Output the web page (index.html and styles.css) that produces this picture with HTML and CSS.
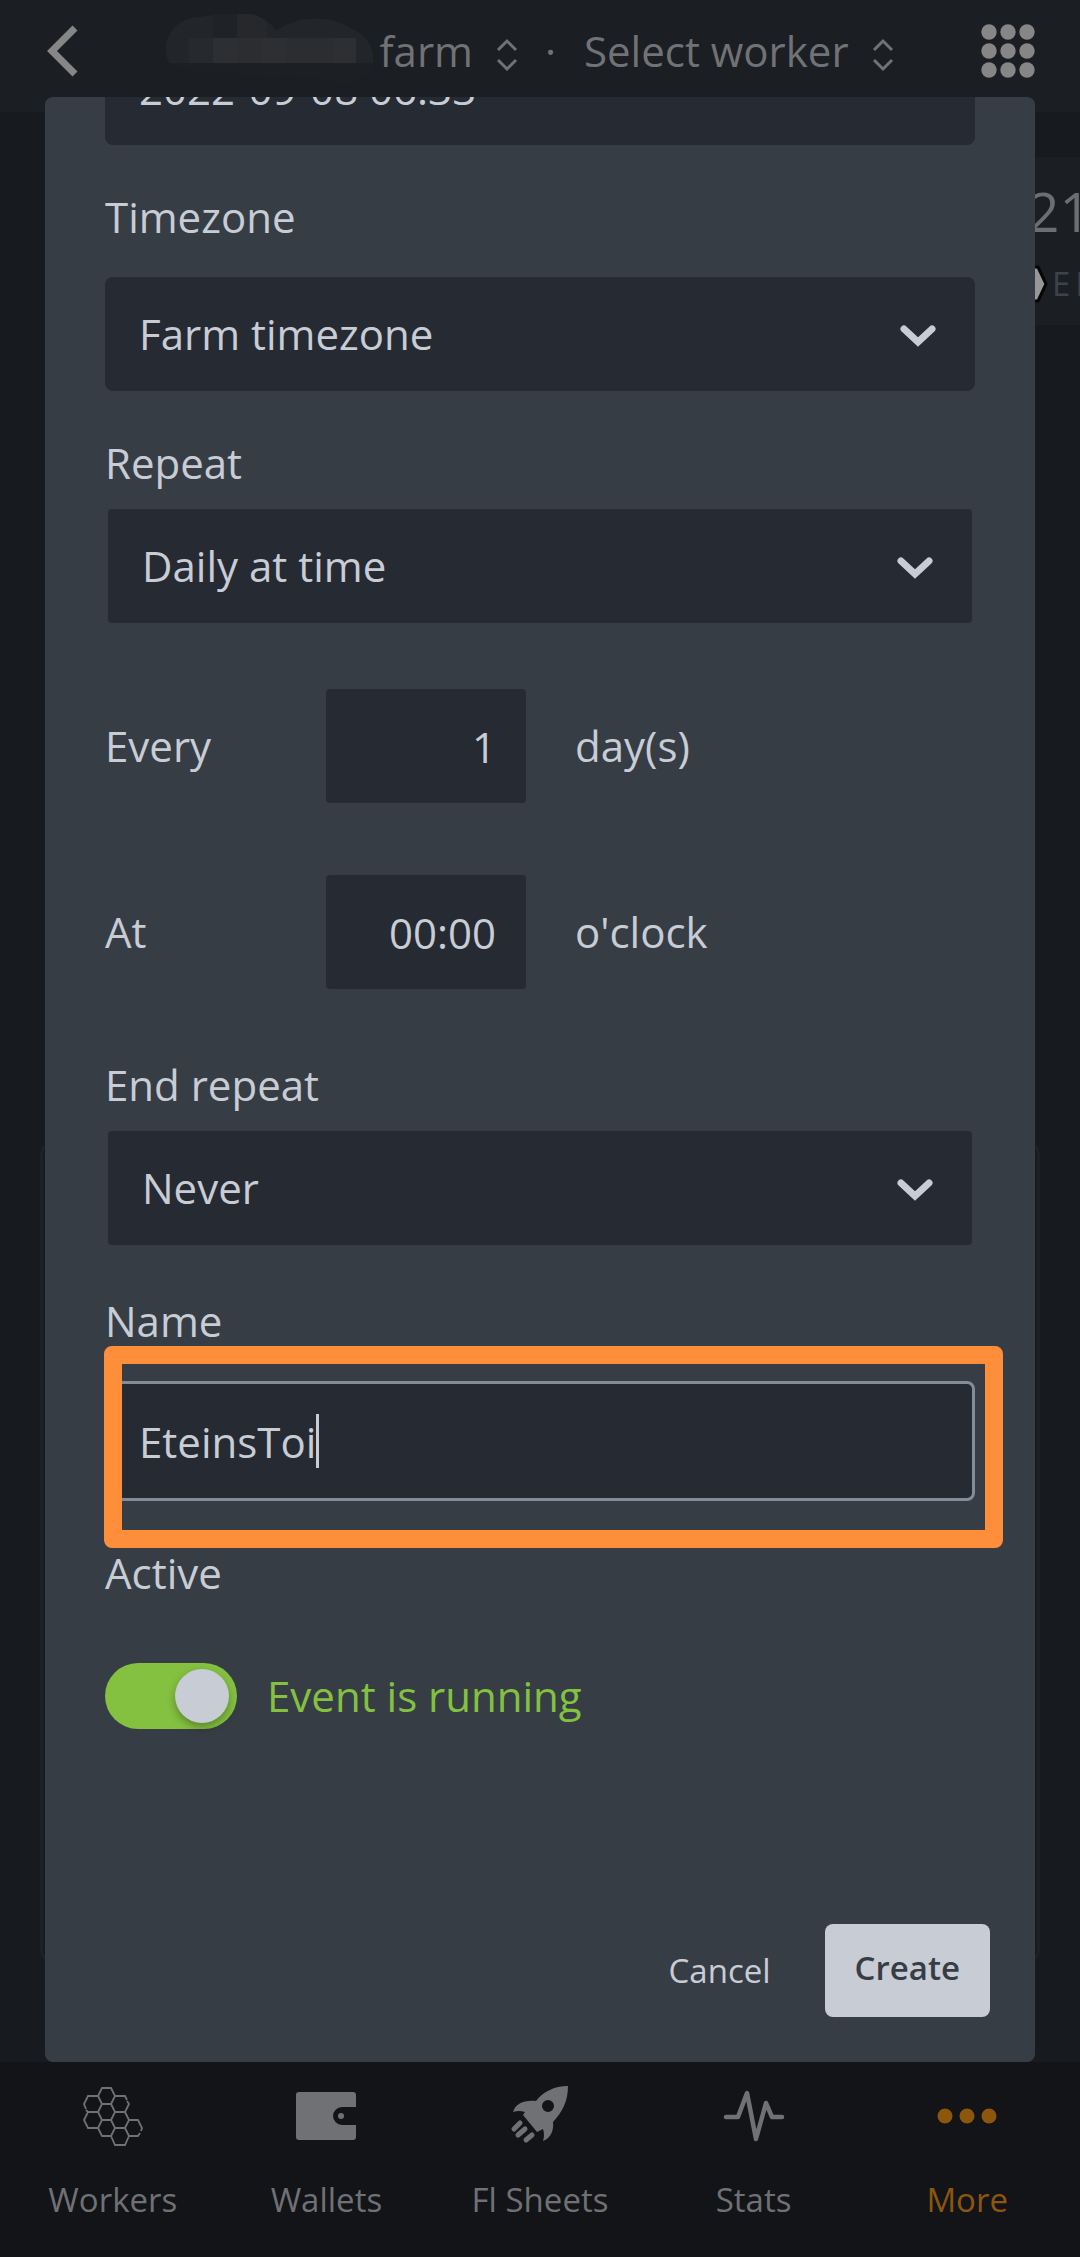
FILE: index.html
```html
<!DOCTYPE html>
<html lang="en">
<head>
<meta charset="utf-8">
<meta name="viewport" content="width=device-width, initial-scale=1">
<title>Create event</title>
<link rel="stylesheet" href="styles.css">
</head>
<body>
<div class="app">
  <header class="topbar">
    <button class="icon-button" type="button" aria-label="Back">
      <svg class="icon-back" viewBox="0 0 32 52"><path d="M30 3 L7 26 L30 49" fill="none" stroke="currentColor" stroke-width="7"/></svg>
    </button>
    <div class="crumbs">
      <button class="crumb" type="button">
        <svg class="redacted" viewBox="0 0 210 74" aria-hidden="true">
          <path d="M4 49 C-6 28 8 4 34 3 Q50 0 62 0 H86 Q102 4 112 17 C128 2 165 0 186 14 C206 20 214 40 206 56 Q196 70 176 70 Q150 62 120 62 Q90 64 60 59 Q20 60 4 49Z" fill="#1c1f23"/>
          <path d="M4 49 C-6 28 8 4 34 3 Q50 0 62 0 H86 Q102 4 112 17 C128 2 165 0 186 14 C202 20 210 34 208 49Z" fill="#222529"/>
          <path d="M48 0H72V24H48Z" fill="#1f2226"/>
          <path d="M72 0H86Q96 2 102 8V24H72Z" fill="#26282c"/>
          <path d="M24 24H48V49H24Z" fill="#26292d"/>
          <path d="M48 24H191V49H48Z" fill="#2d2f33"/>
          <path d="M72 24H96V49H72ZM120 24H168V49H120Z" fill="#2b2d31"/>
        </svg>
        <span>farm</span>
        <svg class="icon-sort" viewBox="0 0 20 32"><path d="M1 11 L10 2 L19 11 M1 21 L10 30 L19 21" fill="none" stroke="currentColor" stroke-width="3"/></svg>
      </button>
      <span>·</span>
      <button class="crumb" type="button">
        <span>Select worker</span>
        <svg class="icon-sort" viewBox="0 0 20 32"><path d="M1 11 L10 2 L19 11 M1 21 L10 30 L19 21" fill="none" stroke="currentColor" stroke-width="3"/></svg>
      </button>
    </div>
    <button class="icon-button" type="button" aria-label="Apps">
      <svg class="icon-grid" viewBox="0 0 54 54" fill="currentColor"><circle cx="8" cy="8" r="7.7"/><circle cx="27" cy="8" r="7.7"/><circle cx="46" cy="8" r="7.7"/><circle cx="8" cy="27" r="7.7"/><circle cx="27" cy="27" r="7.7"/><circle cx="46" cy="27" r="7.7"/><circle cx="8" cy="46" r="7.7"/><circle cx="27" cy="46" r="7.7"/><circle cx="46" cy="46" r="7.7"/></svg>
    </button>
  </header>

  <main class="content">
    <section class="stat">
      <div>21</div>
      <div class="stat-label">
        <svg class="icon-coin" viewBox="0 0 24 38"><path d="M1 2 H14 L22 19 L14 36 H1Z" fill="#979797" stroke="#050606" stroke-width="3"/></svg>
        <span>EF</span>
      </div>
    </section>
    <section class="panel"></section>
  </main>

  <nav class="tabs">
    <a class="tab" href="#workers">
      <svg class="tab-icon" viewBox="0 0 60 60" fill="none" stroke="currentColor" stroke-width="1.8"><path d="M19 0H28L32 8L28 16H19L15 8ZM15 8H5L1 16L3 21M3 22L5 24H15L19 16M19 16L15 24L19 32H28L32 24L28 16M32 8H42L44 12M44 13L46 16L42 24H32M5 24L1 32L5 40H15L19 32M15 40L19 48H28L32 40L28 32M42 24L46 32L42 40H32M46 32H55L59 40L58 43M57 45L55 48H46L42 40M28 48L32 57H42L46 48"/></svg>
      <span>Workers</span>
    </a>
    <a class="tab" href="#wallets">
      <svg class="tab-icon" viewBox="0 0 60 60"><path d="M3 4H57Q60 4 60 7V19H46A9 9 0 0 0 46 37H60V49Q60 52 57 52H3Q0 52 0 49V7Q0 4 3 4Z" fill="currentColor"/><circle cx="45" cy="28" r="3" fill="currentColor"/></svg>
      <span>Wallets</span>
    </a>
    <a class="tab" href="#sheets">
      <svg class="tab-icon" viewBox="0 0 60 60"><path fill="currentColor" fill-rule="evenodd" d="M58 -2C44 -2 33 4 26 13C14 12 6 15 3 24Q9 22 15 24L13 27L27 44L33 41Q35 47 33 53C41 50 44 42 43 34C52 24 58 14 58 -2ZM38 12A6 6 0 1 1 38 24A6 6 0 1 1 38 12Z"/><path d="M4 41L10 35M8 47L15 41M16 52L22 47" stroke="currentColor" stroke-width="5" stroke-linecap="round"/></svg>
      <span>Fl Sheets</span>
    </a>
    <a class="tab" href="#stats">
      <svg class="tab-icon" viewBox="0 0 60 60"><path d="M2 29H14L23 5L32 51L42 15L48 29H58" fill="none" stroke="currentColor" stroke-width="4.5" stroke-linecap="round" stroke-linejoin="round"/></svg>
      <span>Stats</span>
    </a>
    <a class="tab tab-active" href="#more">
      <svg class="tab-icon" viewBox="0 0 60 60" fill="currentColor"><circle cx="8" cy="28" r="7.5"/><circle cx="30" cy="28" r="7.5"/><circle cx="52" cy="28" r="7.5"/></svg>
      <span>More</span>
    </a>
  </nav>
</div>

<div class="overlay">
  <form class="dialog" role="dialog" aria-label="Create event">
    <div class="dialog-body">
      <input class="control" type="text" value="2022-09-08 06:33" aria-label="Date">

      <div class="field">
        <label class="label label-roomy" for="timezone">Timezone</label>
        <div class="select">
          <select class="control" id="timezone"><option>Farm timezone</option></select>
          <svg class="chevron" viewBox="0 0 36 22"><path d="M4 4 L18 17 L32 4" fill="none" stroke="currentColor" stroke-width="7" stroke-linecap="round"/></svg>
        </div>
      </div>

      <div class="field">
        <label class="label" for="repeat">Repeat</label>
        <div class="select select-inset">
          <select class="control" id="repeat"><option>Daily at time</option></select>
          <svg class="chevron" viewBox="0 0 36 22"><path d="M4 4 L18 17 L32 4" fill="none" stroke="currentColor" stroke-width="7" stroke-linecap="round"/></svg>
        </div>
      </div>

      <div class="schedule">
        <label for="every">Every</label>
        <input class="control number" id="every" type="text" inputmode="numeric" value="1">
        <span>day(s)</span>
        <label for="at">At</label>
        <input class="control number" id="at" type="text" value="00:00">
        <span>o'clock</span>
      </div>

      <div class="field">
        <label class="label" for="end">End repeat</label>
        <div class="select select-inset">
          <select class="control" id="end"><option>Never</option></select>
          <svg class="chevron" viewBox="0 0 36 22"><path d="M4 4 L18 17 L32 4" fill="none" stroke="currentColor" stroke-width="7" stroke-linecap="round"/></svg>
        </div>
      </div>

      <div class="field name-field">
        <label class="label label-roomy" for="name">Name</label>
        <div class="name-box">
          <input class="control control-focused" id="name" type="text" value="EteinsToi">
          <div class="caret-line" aria-hidden="true"><span class="caret-space">EteinsToi</span><span class="caret"></span></div>
          <div class="highlight"></div>
        </div>
      </div>

      <div class="field">
        <div class="label">Active</div>
        <label class="switch">
          <input class="switch-input" type="checkbox" checked>
          <span>Event is running</span>
        </label>
      </div>
    </div>

    <div class="actions">
      <button class="button" type="button">Cancel</button>
      <button class="button button-primary" type="submit">Create</button>
    </div>
  </form>
</div>
</body>
</html>
```
FILE: styles.css
```css
* {
  box-sizing: border-box;
}

body {
  margin: 0;
  position: relative;
  background: #171a1e;
  color: #c8ccd5;
  font-family: "Open Sans", "Noto Sans", sans-serif;
  font-size: 42px;
  line-height: 56px;
}

button,
input,
select {
  font: inherit;
  color: inherit;
  margin: 0;
  border: 0;
  background: none;
}

svg {
  display: block;
  flex: none;
  overflow: visible;
}

/* Page behind the dialog */

.app {
  display: flex;
  flex-direction: column;
  min-height: 100vh;
  overflow: hidden;
}

.topbar {
  display: flex;
  align-items: center;
  justify-content: space-between;
  height: 112px;
  padding: 0 45px 10px;
  background: #1b1e23;
  color: #707275;
}

.icon-button,
.crumb {
  display: flex;
  align-items: center;
  padding: 0;
}

.icon-button {
  color: #868686;
}

.icon-back {
  width: 32px;
  height: 52px;
}

.icon-grid {
  width: 54px;
  height: 54px;
}

.crumbs {
  display: flex;
  align-items: center;
  gap: 28px;
}

.redacted {
  width: 210px;
  height: 74px;
  margin-right: 4px;
}

.icon-sort {
  width: 20px;
  height: 32px;
  margin: 8px 0 0 24px;
}

.content {
  display: flex;
  flex-direction: column;
  flex: 1;
}

.stat {
  align-self: flex-end;
  width: 80px;
  height: 168px;
  margin-top: 45px;
  padding: 13px 0 0 28px;
  background: #1b1e22;
  color: #6c6e71;
  font-size: 55px;
  line-height: 82px;
}

.stat-label {
  display: flex;
  align-items: center;
  gap: 4px;
  color: #3c4249;
  font-size: 33px;
  line-height: 64px;
  letter-spacing: 5px;
}

.icon-coin {
  width: 24px;
  height: 38px;
  margin-left: -4px;
}

.panel {
  height: 818px;
  margin: 818px 40px 0;
  border: 3px solid #1d2024;
  border-radius: 10px;
}

.tabs {
  display: grid;
  grid-template-columns: repeat(5, 1fr);
  padding: 26px 6px 33px;
  background: #131418;
  color: #6f7174;
  font-size: 33px;
  line-height: 48px;
}

.tab {
  display: flex;
  flex-direction: column;
  align-items: center;
  gap: 28px;
  color: inherit;
  text-decoration: none;
}

.tab-active {
  color: #8c560c;
}

.tab-icon {
  width: 60px;
  height: 60px;
}

/* Dialog */

.overlay {
  position: absolute;
  top: 0;
  left: 0;
  right: 0;
  padding: 97px 45px 0;
}

.dialog {
  overflow: hidden;
  border-radius: 8px;
  background: #373d45;
  padding-bottom: 45px;
}

/* The form is scrolled, so its first box runs under the top edge */
.dialog-body {
  margin-top: -66px;
  padding: 0 60px;
}

.control {
  display: block;
  width: 100%;
  height: 114px;
  padding: 0 34px;
  border-radius: 8px;
  background: #262a32;
  appearance: none;
  outline: none;
}

.field {
  margin-top: 44px;
}

.label {
  display: block;
  margin-bottom: 18px;
}

.label-roomy {
  margin-bottom: 32px;
}

.select {
  display: grid;
  align-items: center;
}

.select > * {
  grid-area: 1 / 1;
}

.select-inset {
  padding: 0 3px;
}

.select-inset .control,
.number {
  border-radius: 4px;
}

.chevron {
  width: 36px;
  height: 22px;
  margin: 4px 39px 0 0;
  justify-self: end;
  pointer-events: none;
}

.schedule {
  display: grid;
  grid-template-columns: 172px 200px 1fr;
  align-items: center;
  gap: 72px 49px;
  margin: 66px 0 68px;
}

.number {
  padding: 0 30px;
  text-align: right;
}

.schedule + .field {
  margin-top: 0;
}

.name-field {
  margin-top: 48px;
}

.name-box {
  position: relative;
}

.control-focused {
  height: 120px;
  border: 3px solid #838d99;
  padding: 0 31px;
}

.caret-line {
  position: absolute;
  top: 33px;
  left: 34px;
  display: flex;
  pointer-events: none;
}

.caret-space {
  visibility: hidden;
}

.caret {
  width: 3px;
  height: 54px;
  background: #c8ccd5;
}

.highlight {
  position: absolute;
  inset: -35px -28px -47px -1px;
  border: 18px solid #ff8e3a;
  border-radius: 8px;
  pointer-events: none;
}

.switch {
  display: flex;
  align-items: center;
  gap: 30px;
  margin-top: 62px;
  color: #84c141;
}

.switch-input {
  display: flex;
  align-items: center;
  justify-content: flex-end;
  width: 132px;
  height: 66px;
  padding: 0 8px;
  border-radius: 33px;
  background: #84c141;
  appearance: none;
}

.switch-input::before {
  content: "";
  width: 54px;
  height: 54px;
  border-radius: 50%;
  background: #c8ccd5;
  box-shadow: 0 4px 8px rgba(0, 0, 0, 0.3);
}

.actions {
  display: flex;
  justify-content: flex-end;
  gap: 24px;
  margin-top: 195px;
  padding-right: 45px;
}

.button {
  height: 93px;
  padding: 0 30px;
  border-radius: 8px;
  font-size: 33px;
  line-height: 48px;
}

.button-primary {
  padding-bottom: 6px;
  background: #c8ccd5;
  color: #373d45;
  font-weight: 600;
}
```
